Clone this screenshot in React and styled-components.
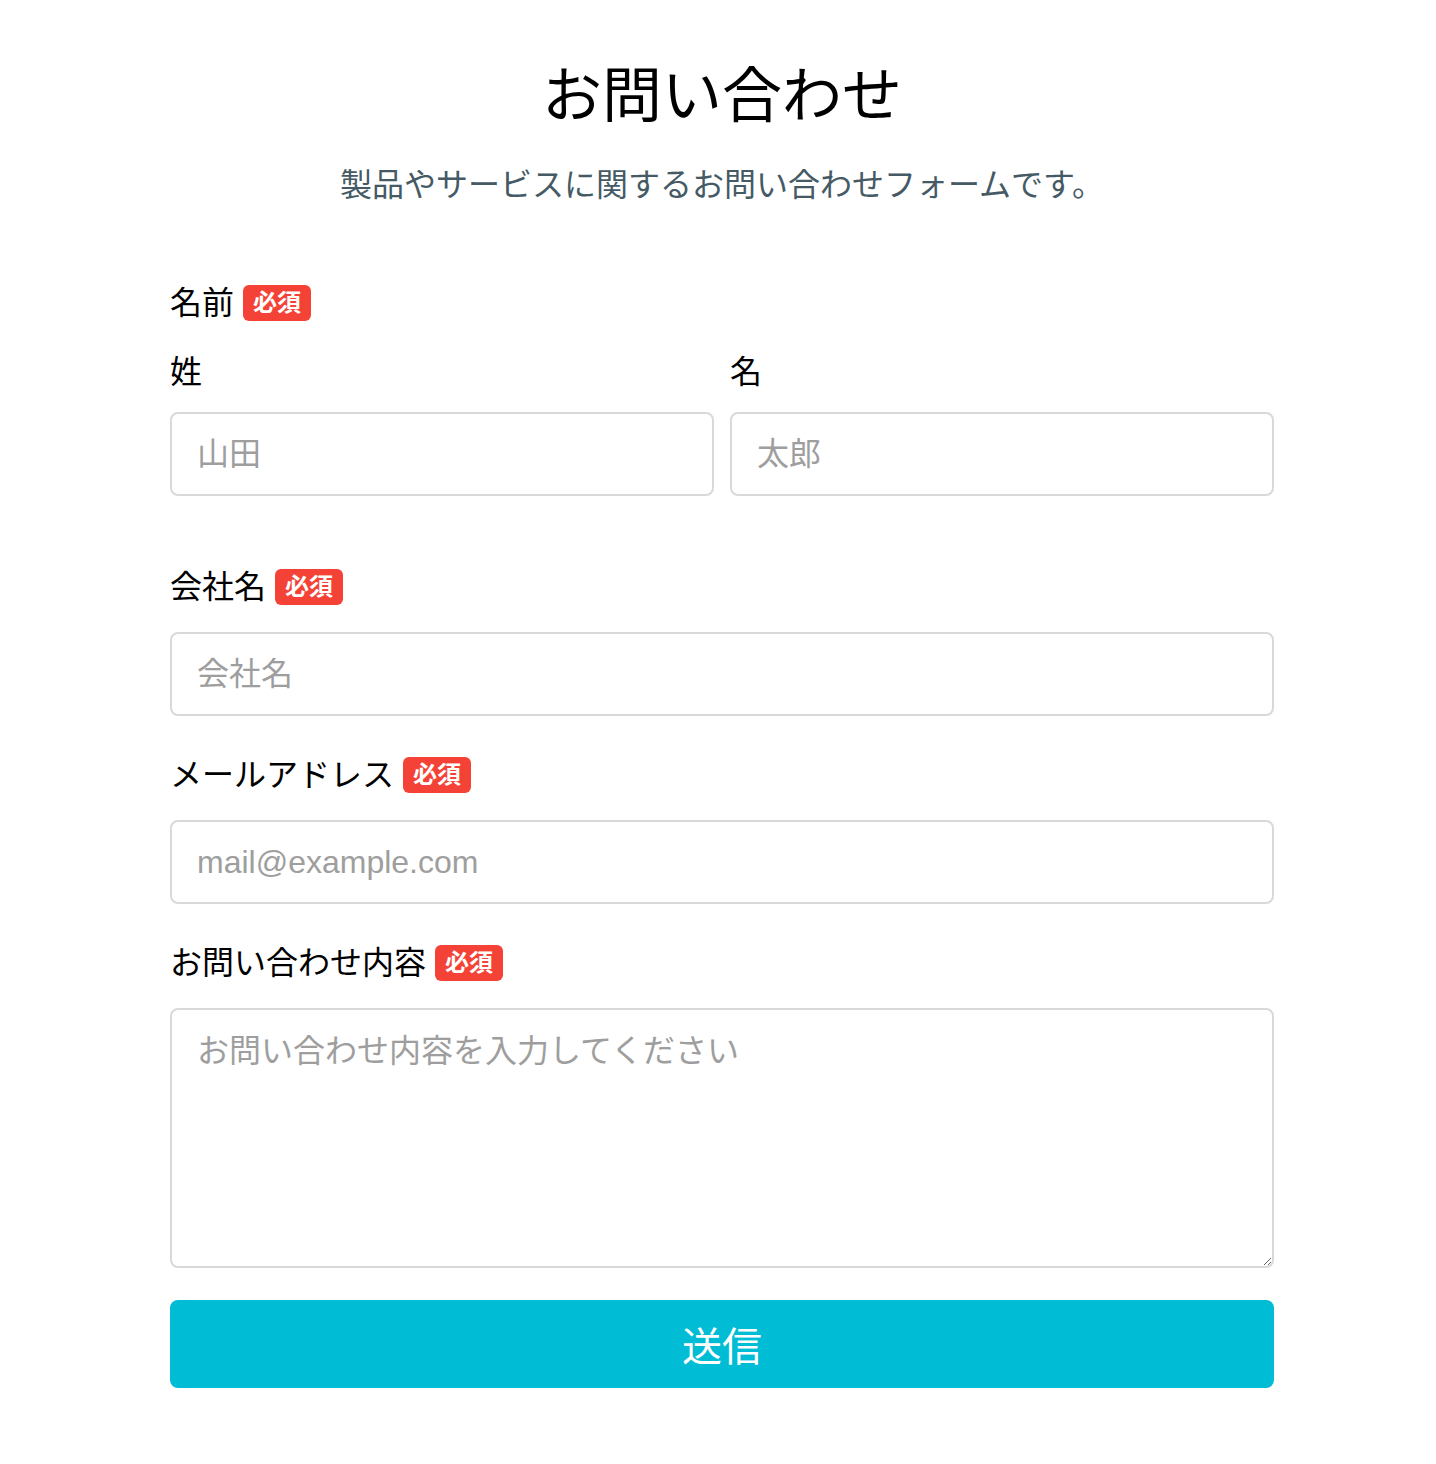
import React from 'react'
import styled, { createGlobalStyle } from 'styled-components';

const GlobalStyle = createGlobalStyle`
  body {
    margin: 0;
    background: #fff;
    font-family: "Liberation Sans", "Noto Sans CJK JP", sans-serif;
    color: #000;
  }
  * { box-sizing: border-box; }
`;

const App = () => {
  return (
    <>
      <GlobalStyle />
      <Pagina>
        <Cabecera>
          <Titulo>お問い合わせ</Titulo>
          <Subtitulo>製品やサービスに関するお問い合わせフォームです。</Subtitulo>
        </Cabecera>

        <Formulario onSubmit={(e) => e.preventDefault()}>
          <Grupo $extra>
            <Etiqueta>名前<Requerido>必須</Requerido></Etiqueta>
            <Fila>
              <Columna>
                <SubEtiqueta>姓</SubEtiqueta>
                <Input type='text' placeholder='山田' />
              </Columna>
              <Columna>
                <SubEtiqueta>名</SubEtiqueta>
                <Input type='text' placeholder='太郎' />
              </Columna>
            </Fila>
          </Grupo>

          <Grupo>
            <Etiqueta>会社名<Requerido>必須</Requerido></Etiqueta>
            <Input type='text' placeholder='会社名' />
          </Grupo>

          <Grupo>
            <Etiqueta>メールアドレス<Requerido>必須</Requerido></Etiqueta>
            <Input type='email' placeholder='mail@example.com' />
          </Grupo>

          <Grupo $ultimo>
            <Etiqueta>お問い合わせ内容<Requerido>必須</Requerido></Etiqueta>
            <Textarea placeholder='お問い合わせ内容を入力してください' />
          </Grupo>

          <Boton type='submit'>送信</Boton>
        </Formulario>
      </Pagina>
    </>
  );
}

const Pagina = styled.div`
  width: 1104px;
  margin: 0 0 0 170px;
  padding: 62px 0 76px;
`;

const Cabecera = styled.header`
  display: flex;
  flex-direction: column;
  align-items: center;
  gap: 33px;
  margin-bottom: 80px;
`;

const Titulo = styled.h1`
  margin: 0;
  font-size: 60px;
  line-height: 70px;
  font-weight: 400;
`;

const Subtitulo = styled.p`
  margin: 0;
  font-size: 32px;
  line-height: 40px;
  color: #455a64;
`;

const Formulario = styled.form`
  display: flex;
  flex-direction: column;
`;

const Grupo = styled.div`
  display: flex;
  flex-direction: column;
  margin-bottom: ${(p) => (p.$ultimo ? '32px' : p.$extra ? '73px' : '41px')};
`;

const Etiqueta = styled.label`
  display: flex;
  align-items: center;
  gap: 9px;
  height: 36px;
  margin-bottom: 27px;
  font-size: 32px;
  line-height: 36px;
`;

const SubEtiqueta = styled.label`
  display: block;
  height: 36px;
  font-size: 32px;
  line-height: 36px;
  margin-bottom: 22px;
`;

const Requerido = styled.span`
  display: inline-flex;
  align-items: center;
  justify-content: center;
  height: 36px;
  padding: 0 10px;
  border-radius: 6px;
  background: #f44336;
  color: #fff;
  font-size: 24px;
  font-weight: 700;
  line-height: 1;
`;

const Fila = styled.div`
  display: grid;
  grid-template-columns: 1fr 1fr;
  gap: 16px;
  margin-top: 6px;
`;

const Columna = styled.div`
  display: flex;
  flex-direction: column;
`;

const Input = styled.input`
  width: 100%;
  height: 84px;
  padding: 0 25px;
  border: 2px solid #d9d9d9;
  border-radius: 8px;
  font-family: inherit;
  font-size: 32px;
  color: #000;
  outline: none;

  &::placeholder {
    color: #9e9e9e;
  }
`;

const Textarea = styled.textarea`
  width: 100%;
  height: 260px;
  padding: 21px 25px;
  border: 2px solid #d9d9d9;
  border-radius: 8px;
  font-family: inherit;
  font-size: 32px;
  line-height: 40px;
  outline: none;
  resize: vertical;

  &::placeholder {
    color: #9e9e9e;
  }
`;

const Boton = styled.button`
  width: 100%;
  height: 88px;
  border: none;
  border-radius: 8px;
  background: #00bcd4;
  color: #fff;
  font-family: inherit;
  font-size: 40px;
  cursor: pointer;
`;

export default App;
